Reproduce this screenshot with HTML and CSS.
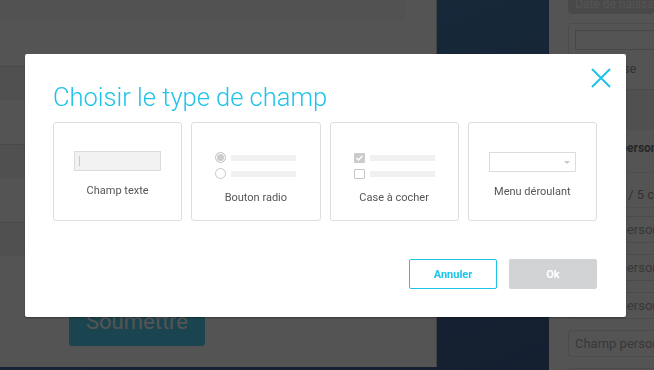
FILE: index.html
```html
<!DOCTYPE html>
<html lang="fr">
<head>
  <meta charset="UTF-8" />
  <meta name="viewport" content="width=device-width, initial-scale=1.0"/>
  <title>Formulaire - Choisir le type de champ</title>
  <link rel="stylesheet" href="styles.css">
</head>
<body>
  <div class="page">
    <div class="main-panel">
      <div class="top-card"></div>
      <div class="group">
        <div class="group-head"></div>
        <div class="group-body"></div>
      </div>
      <div class="group">
        <div class="group-head"></div>
        <div class="group-body"></div>
      </div>
      <div class="group">
        <div class="group-head"></div>
      </div>
      <button class="submit-btn">Soumettre</button>
    </div>

    <div class="sidebar">
      <div class="side-card">Date de naissance</div>
      <div class="side-box">
        <div class="side-input"></div>
        <div class="side-text">Entreprise</div>
      </div>
      <div class="side-band"></div>
      <div class="side-title">Champs personnalisés</div>
      <div class="side-count">Total : 0 / 5 champs</div>
      <div class="side-field">Champ personnalisé 1</div>
      <div class="side-field">Champ personnalisé 2</div>
      <div class="side-field">Champ personnalisé 3</div>
      <div class="side-field">Champ personnalisé 4</div>
      <div class="side-field">Champ personnalisé 5</div>
    </div>
  </div>

  <!-- Modal -->
  <div class="overlay"></div>
  <div class="modal">
    <button class="close-btn" aria-label="Fermer">
      <svg width="20" height="20" viewBox="0 0 20 20">
        <path d="M1 1 L19 19 M19 1 L1 19" stroke="#1fc3e8" stroke-width="2" fill="none"/>
      </svg>
    </button>
    <h2 class="modal-title">Choisir le type de champ</h2>

    <div class="field-types">
      <div class="type-card">
        <div class="fake-input"><span class="caret"></span></div>
        <div class="type-label">Champ texte</div>
      </div>

      <div class="type-card">
        <div class="option-row">
          <span class="radio checked"></span>
          <span class="option-line"></span>
        </div>
        <div class="option-row">
          <span class="radio"></span>
          <span class="option-line"></span>
        </div>
        <div class="type-label low">Bouton radio</div>
      </div>

      <div class="type-card">
        <div class="option-row">
          <span class="checkbox checked">
            <svg width="11" height="10" viewBox="0 0 11 10">
              <path d="M2.5 5 L4.6 7 L8.5 2.8" stroke="#fff" stroke-width="1.4" fill="none"/>
            </svg>
          </span>
          <span class="option-line"></span>
        </div>
        <div class="option-row">
          <span class="checkbox"></span>
          <span class="option-line"></span>
        </div>
        <div class="type-label low">Case à cocher</div>
      </div>

      <div class="type-card">
        <div class="fake-select"><span class="select-arrow"></span></div>
        <div class="type-label">Menu déroulant</div>
      </div>
    </div>

    <div class="modal-footer">
      <button class="btn btn-cancel">Annuler</button>
      <button class="btn btn-ok">Ok</button>
    </div>
  </div>
</body>
</html>
```

FILE: styles.css
```css
body {
  margin: 0;
  font-family: Roboto, "Liberation Sans", sans-serif;
  background: linear-gradient(160deg, #4885b8, #3f5c90);
  height: 370px;
  overflow: hidden;
}
.page {
  display: flex;
  height: 370px;
}
.main-panel {
  width: 436px;
  height: 367px;
  background: #fff;
  border-right: 1px solid #c8c8c8;
  display: flex;
  flex-direction: column;
}
.top-card {
  width: 405px;
  height: 20px;
  background: #f8f8f8;
  border-bottom-right-radius: 4px;
  margin-bottom: 46px;
}
.group {
  border-top: 1px solid #dcdcdc;
}
.group-head {
  height: 32px;
  background: #f3f3f3;
  border-bottom: 1px solid #ececec;
}
.group-body {
  height: 44px;
}
.submit-btn {
  margin: 41px 0 0 69px;
  width: 136px;
  height: 49px;
  background: #50cfee;
  border: none;
  border-radius: 3px;
  color: #fff;
  font-family: Roboto, sans-serif;
  font-size: 22px;
}
.sidebar {
  margin-left: auto;
  width: 86px;
  background: #fff;
  padding-left: 19px;
  display: flex;
  flex-direction: column;
  white-space: nowrap;
  overflow: hidden;
}
.side-card {
  flex: none;
  height: 14px;
  background: #dcdcdc;
  border-radius: 0 0 4px 4px;
  color: #fff;
  font-size: 12px;
  line-height: 8px;
  padding-left: 7px;
  margin-bottom: 9px;
}
.side-box {
  flex: none;
  height: 67px;
  border: 1px solid #e6e6e6;
  border-right: none;
  border-radius: 4px 0 0 4px;
  padding: 6px 0 0 6px;
  box-sizing: border-box;
}
.side-input {
  height: 18px;
  border: 1px solid #d8d8d8;
  border-right: none;
}
.side-text {
  font-size: 13px;
  line-height: 15px;
  color: #999;
  margin-top: 11px;
  padding-left: 3px;
}
.side-band {
  flex: none;
  height: 40px;
  background: #f2f2f2;
  margin-left: -19px;
}
.side-title {
  flex: none;
  font-size: 12px;
  line-height: 14px;
  font-weight: bold;
  color: #777;
  margin-top: 11px;
  padding-left: 5px;
}
.side-count {
  flex: none;
  font-size: 13px;
  line-height: 14px;
  color: #999;
  margin: 17px 0 8px -19px;
  padding: 15px 0 5px 30px;
  border-top: 1px solid #ececec;
  border-bottom: 1px solid #ececec;
}
.side-field {
  flex: none;
  height: 27px;
  box-sizing: border-box;
  border: 1px solid #e3e3e3;
  border-right: none;
  border-radius: 4px 0 0 4px;
  margin-bottom: 11px;
  font-size: 13px;
  line-height: 25px;
  color: #aaa;
  padding-left: 6px;
}

.overlay {
  position: fixed;
  top: 0; left: 0;
  width: 100%; height: 100%;
  background: rgba(0,0,0,0.67);
}
.modal {
  position: fixed;
  top: 54px;
  left: 25px;
  width: 601px;
  height: 263px;
  box-sizing: border-box;
  background: #fff;
  border-radius: 2px;
  box-shadow: 0 1px 2px rgba(0,0,0,0.35);
  padding: 28px 29px 28px 28px;
}
.close-btn {
  position: absolute;
  top: 14px;
  right: 15px;
  width: 20px;
  height: 20px;
  padding: 0;
  border: none;
  background: none;
}
.close-btn svg {
  display: block;
}
.modal-title {
  margin: 0 0 10px;
  font-size: 25.5px;
  line-height: 30px;
  font-weight: 300;
  color: #1fc3e8;
}
.field-types {
  display: grid;
  grid-template-columns: repeat(4, 1fr);
  gap: 9px;
}
.type-card {
  height: 99px;
  box-sizing: border-box;
  border: 1px solid #dedede;
  border-radius: 3px;
  padding-top: 28px;
  display: flex;
  flex-direction: column;
  align-items: center;
}
.type-label {
  margin-top: 13px;
  font-size: 11px;
  line-height: 14px;
  color: #555;
}
.type-label.low {
  margin-top: 8px;
}
.fake-input {
  width: 87px;
  height: 20px;
  box-sizing: border-box;
  background: #f2f2f2;
  border: 1px solid #dcdcdc;
  padding: 4px 0 0 4px;
}
.caret {
  display: block;
  width: 1px;
  height: 10px;
  background: #c8c8c8;
}
.fake-select {
  width: 87px;
  height: 20px;
  margin-top: 1px;
  box-sizing: border-box;
  border: 1px solid #dcdcdc;
  display: flex;
  justify-content: flex-end;
  align-items: center;
  padding-right: 5px;
}
.select-arrow {
  width: 0;
  height: 0;
  border-left: 3px solid transparent;
  border-right: 3px solid transparent;
  border-top: 3px solid #c8c8c8;
}
.option-row {
  display: flex;
  align-items: center;
  gap: 5px;
  height: 11px;
  margin-top: 1px;
  margin-bottom: 4px;
}
.radio {
  width: 11px;
  height: 11px;
  box-sizing: border-box;
  border: 1px solid #c8c8c8;
  border-radius: 50%;
  background: #fff;
}
.radio.checked {
  background: #ccc;
  box-shadow: inset 0 0 0 1px #fff;
}
.checkbox {
  width: 11px;
  height: 10px;
  box-sizing: border-box;
  border: 1px solid #c8c8c8;
  border-radius: 1px;
  background: #fff;
}
.checkbox.checked {
  background: #cbcbcb;
  border-color: #cbcbcb;
  position: relative;
}
.checkbox svg {
  position: absolute;
  top: -1px;
  left: -1px;
}
.option-line {
  width: 65px;
  height: 6px;
  background: #f0f0f0;
}
.modal-footer {
  margin-top: 38px;
  display: flex;
  justify-content: flex-end;
  gap: 12px;
}
.btn {
  width: 88px;
  height: 30px;
  border-radius: 2px;
  font-family: Roboto, sans-serif;
  font-size: 11px;
  font-weight: bold;
  cursor: pointer;
}
.btn-cancel {
  background: #fff;
  border: 1px solid #1fc3e8;
  color: #1fc3e8;
}
.btn-ok {
  background: #d1d3d4;
  border: none;
  color: #fff;
}
```
